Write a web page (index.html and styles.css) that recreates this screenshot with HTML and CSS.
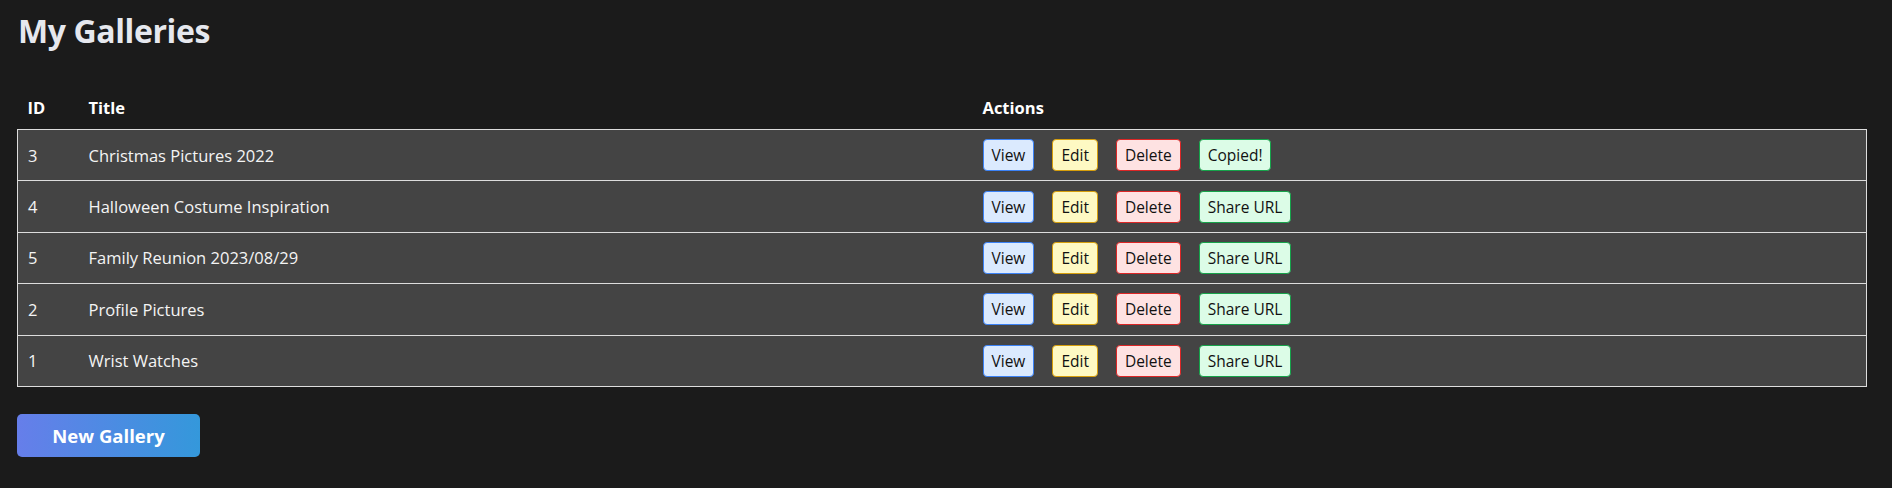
FILE: index.html
```html
<!DOCTYPE html>
<html lang="en">
<head>
<meta charset="utf-8">
<title>My Galleries</title>
<link rel="stylesheet" href="styles.css">
</head>
<body>
<main class="page">
  <h1 class="page-title">My Galleries</h1>
  <table class="gallery-table">
    <thead>
      <tr>
        <th class="col-id">ID</th>
        <th class="col-title">Title</th>
        <th class="col-actions">Actions</th>
      </tr>
    </thead>
    <tbody>
      <tr>
        <td>3</td>
        <td>Christmas Pictures 2022</td>
        <td><div class="actions"><button class="btn btn-view">View</button><button class="btn btn-edit">Edit</button><button class="btn btn-delete">Delete</button><button class="btn btn-share">Copied!</button></div></td>
      </tr>
      <tr>
        <td>4</td>
        <td>Halloween Costume Inspiration</td>
        <td><div class="actions"><button class="btn btn-view">View</button><button class="btn btn-edit">Edit</button><button class="btn btn-delete">Delete</button><button class="btn btn-share">Share URL</button></div></td>
      </tr>
      <tr>
        <td>5</td>
        <td>Family Reunion 2023/08/29</td>
        <td><div class="actions"><button class="btn btn-view">View</button><button class="btn btn-edit">Edit</button><button class="btn btn-delete">Delete</button><button class="btn btn-share">Share URL</button></div></td>
      </tr>
      <tr>
        <td>2</td>
        <td>Profile Pictures</td>
        <td><div class="actions"><button class="btn btn-view">View</button><button class="btn btn-edit">Edit</button><button class="btn btn-delete">Delete</button><button class="btn btn-share">Share URL</button></div></td>
      </tr>
      <tr>
        <td>1</td>
        <td>Wrist Watches</td>
        <td><div class="actions"><button class="btn btn-view">View</button><button class="btn btn-edit">Edit</button><button class="btn btn-delete">Delete</button><button class="btn btn-share">Share URL</button></div></td>
      </tr>
    </tbody>
  </table>
  <button class="btn-new">New Gallery</button>
</main>
</body>
</html>
```

FILE: styles.css
```css
html, body {
  margin: 0;
  padding: 0;
  background: #1b1b1b;
}

body {
  font-family: "Open Sans", "Noto Sans", "Liberation Sans", sans-serif;
  color: #ffffff;
  font-size: 16.5px;
}

.page {
  padding: 12px 26px 0 17px;
}

.page-title {
  margin: 0 0 0 1px;
  font-size: 32px;
  letter-spacing: -0.4px;
  line-height: 38px;
  font-weight: 700;
  color: #e6e8ee;
}

.gallery-table {
  margin-top: 38px;
  width: 100%;
  table-layout: fixed;
  border-collapse: collapse;
}

.gallery-table th {
  box-sizing: border-box;
  text-align: left;
  font-weight: 700;
  padding: 9px 10px 11px;
  line-height: 21px;
  color: #ffffff;
}

.col-id { width: 61px; }
.col-title { width: 894px; }
.col-actions { width: 894px; }

.gallery-table tbody tr {
  background: #444444;
  border: 1px solid #dddddd;
}

.gallery-table td {
  padding: 0 10px;
  height: 50.4px;
  line-height: 21px;
  color: #f4f4f4;
}

.actions {
  display: flex;
  gap: 18px;
  align-items: center;
}

.btn {
  font-family: inherit;
  font-size: 15.5px;
  line-height: 20px;
  padding: 5px 8px;
  border: 1px solid;
  border-radius: 4px;
  color: #111111;
  cursor: pointer;
}

.btn-view { background: #dbeafe; border-color: #3b82f6; }
.btn-edit { background: #fef9c3; border-color: #d69e0b; }
.btn-delete { background: #fee2e2; border-color: #dc2626; }
.btn-share { background: #dcfce7; border-color: #16a34a; }

.btn-new {
  margin-top: 27px;
  width: 183px;
  height: 43px;
  border: none;
  border-radius: 5px;
  background: linear-gradient(90deg, #667eea, #3498db);
  color: #ffffff;
  font-family: inherit;
  font-size: 18.5px;
  font-weight: 700;
  cursor: pointer;
}
```
